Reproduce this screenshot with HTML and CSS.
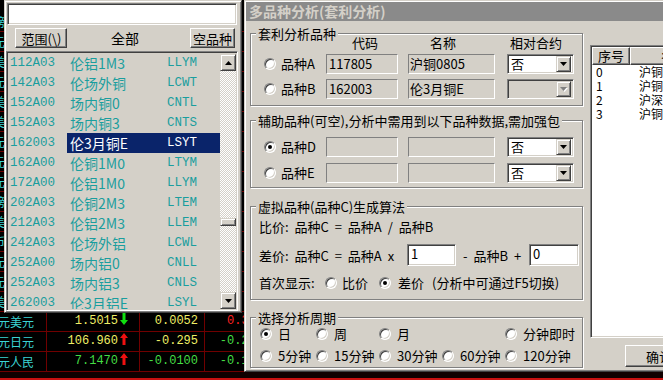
FILE: index.html
```html
<!DOCTYPE html>
<html>
<head>
<meta charset="utf-8">
<link rel="stylesheet" href="styles.css">
</head>
<body>
<div class="desk">
  <div class="drow"><span class="dn up">镑</span><span></span><span></span><span></span></div>
  <div class="drow"><span class="dn up">元</span><span></span><span></span><span></span></div>
  <div class="drow"><span class="dn up">美</span><span></span><span></span><span></span></div>
  <div class="drow"><span class="dn up">元</span><span></span><span></span><span></span></div>
  <div class="drow"><span class="dn up">美</span><span></span><span></span><span></span></div>
  <div class="drow"><span class="dn up">美</span><span></span><span></span><span></span></div>
  <div class="drow"><span class="dn up">元</span><span></span><span></span><span></span></div>
  <div class="drow"><span class="dn up">元</span><span></span><span></span><span></span></div>
  <div class="drow"><span class="dn up">元</span><span></span><span></span><span></span></div>
  <div class="drow"><span class="dn up">镑</span><span></span><span></span><span></span></div>
  <div class="drow"><span class="dn up">美</span><span></span><span></span><span></span></div>
  <div class="drow"><span class="dn up">币</span><span></span><span></span><span></span></div>
  <div class="drow"><span class="dn up">元</span><span></span><span></span><span></span></div>
  <div class="drow"><span class="dn up">元</span><span></span><span></span><span></span></div>
  <div class="drow"><span class="dn up">美</span><span></span><span></span><span></span></div>
  <div class="drow"><span class="dn">欧元美元</span><span class="dv yl">1.5015<svg class="ar" width="8" height="12" viewBox="0 0 8 12"><path d="M2.5 0h3v7H8L4 12 0 7h2.5z" fill="#10e010"/></svg></span><span class="dc yl">0.0052</span><span class="dp rdc">0.35%</span></div>
  <div class="drow"><span class="dn">美元日元</span><span class="dv yl">106.960<svg class="ar" width="8" height="12" viewBox="0 0 8 12"><path d="M2.5 12h3V5H8L4 0 0 5h2.5z" fill="#f01010"/></svg></span><span class="dc yl">-0.295</span><span class="dp gr">-0.28%</span></div>
  <div class="drow"><span class="dn">美元人民</span><span class="dv gr">7.1470<svg class="ar" width="8" height="12" viewBox="0 0 8 12"><path d="M2.5 12h3V5H8L4 0 0 5h2.5z" fill="#f01010"/></svg></span><span class="dc gr">-0.0100</span><span class="dp gr">-0.14%</span></div>
  <div class="dfoot"></div>
</div>

<div class="popup">
  <div class="pinput"></div>
  <div class="pbar">
    <div class="btn b1">范围(\)</div>
    <div class="plabel">全部</div>
    <div class="btn b2">空品种</div>
  </div>
  <div class="plist">
    <div class="prows">
      <div class="prow"><span>112A03</span><span>伦铝1M3</span><span>LLYM</span></div>
      <div class="prow"><span>142A03</span><span>伦场外铜</span><span>LCWT</span></div>
      <div class="prow"><span>152A00</span><span>场内铜0</span><span>CNTL</span></div>
      <div class="prow"><span>152A03</span><span>场内铜3</span><span>CNTS</span></div>
      <div class="prow sel-row"><span>162003</span><span>伦3月铜E</span><span>LSYT</span></div>
      <div class="prow"><span>162A00</span><span>伦铜1M0</span><span>LTYM</span></div>
      <div class="prow"><span>172A00</span><span>伦铝1M0</span><span>LLYM</span></div>
      <div class="prow"><span>202A03</span><span>伦铜2M3</span><span>LTEM</span></div>
      <div class="prow"><span>212A03</span><span>伦铝2M3</span><span>LLEM</span></div>
      <div class="prow"><span>242A03</span><span>伦场外铝</span><span>LCWL</span></div>
      <div class="prow"><span>252A00</span><span>场内铝0</span><span>CNLL</span></div>
      <div class="prow"><span>252A03</span><span>场内铝3</span><span>CNLS</span></div>
      <div class="prow"><span>262003</span><span>伦3月铝E</span><span>LSYL</span></div>
    </div>
    <div class="vscroll">
      <div class="sbtn"><svg width="7" height="4" viewBox="0 0 7 4"><path d="M3.5 0L7 4H0z" fill="#000"/></svg></div>
      <div class="strack"><div class="thumb"></div></div>
      <div class="sbtn"><svg width="7" height="4" viewBox="0 0 7 4"><path d="M0 0h7L3.5 4z" fill="#000"/></svg></div>
    </div>
  </div>
</div>

<div class="dlg">
  <div class="title">多品种分析(套利分析)</div>
  <div class="dbody">
    <div class="dleft">
      <div class="grp g1">
        <div class="gt">套利分析品种</div>
        <div class="hdr"><span class="h1">代码</span><span class="h2">名称</span><span class="h3">相对合约</span></div>
        <div class="frow r1"><span class="rd"></span><span class="fl">品种A</span><span class="tb c1">117805</span><span class="tb c2">沪铜0805</span><span class="sel"><span class="sv">否</span><span class="dd"><svg width="7" height="4" viewBox="0 0 7 4"><path d="M0 0h7L3.5 4z" fill="#000"/></svg></span></span></div>
        <div class="frow r2"><span class="rd"></span><span class="fl">品种B</span><span class="tb c1">162003</span><span class="tb c2">伦3月铜E</span><span class="sel dis"><span class="sv"></span><span class="dd"><svg width="8" height="5" viewBox="0 0 8 5"><path d="M1 1h7L4.5 5z" fill="#fff"/><path d="M0 0h7L3.5 4z" fill="#808080"/></svg></span></span></div>
      </div>
      <div class="grp g2">
        <div class="gt">辅助品种(可空),分析中需用到以下品种数据,需加强包</div>
        <div class="frow r1"><span class="rd on"></span><span class="fl">品种D</span><span class="tb c1"></span><span class="tb c2"></span><span class="sel"><span class="sv">否</span><span class="dd"><svg width="7" height="4" viewBox="0 0 7 4"><path d="M0 0h7L3.5 4z" fill="#000"/></svg></span></span></div>
        <div class="frow r2b"><span class="rd"></span><span class="fl">品种E</span><span class="tb c1"></span><span class="tb c2"></span><span class="sel"><span class="sv">否</span><span class="dd"><svg width="7" height="4" viewBox="0 0 7 4"><path d="M0 0h7L3.5 4z" fill="#000"/></svg></span></span></div>
      </div>
      <div class="grp g3">
        <div class="gt">虚拟品种(品种C)生成算法</div>
        <div class="l1">比价: 品种C = 品种A / 品种B</div>
        <div class="l2"><span class="pre">差价: 品种C = 品种A x</span><span class="wi w1">1</span><span class="mid">- 品种B +</span><span class="wi w2">0</span></div>
        <div class="l3"><span class="lab">首次显示:</span><span class="rd"></span><span class="o1">比价</span><span class="rd on"></span><span class="o2">差价</span><span class="o3">(分析中可通过F5切换)</span></div>
      </div>
      <div class="grp g4">
        <div class="gt">选择分析周期</div>
        <div class="prd p1">
          <span class="opt"><span class="rd on"></span><span>日</span></span>
          <span class="opt"><span class="rd"></span><span>周</span></span>
          <span class="opt"><span class="rd"></span><span>月</span></span>
          <span class="opt"></span>
          <span class="opt"><span class="rd"></span><span>分钟即时</span></span>
        </div>
        <div class="prd p2">
          <span class="opt"><span class="rd"></span><span>5分钟</span></span>
          <span class="opt"><span class="rd"></span><span>15分钟</span></span>
          <span class="opt"><span class="rd"></span><span>30分钟</span></span>
          <span class="opt"><span class="rd"></span><span>60分钟</span></span>
          <span class="opt"><span class="rd"></span><span>120分钟</span></span>
        </div>
      </div>
    </div>
    <div class="dright">
      <div class="rlist">
        <div class="rhead"><span class="rh rh1">序号</span><span class="rh rh2">名称</span></div>
        <div class="rr"><span>0</span><span>沪铜</span></div>
        <div class="rr"><span>1</span><span>沪铜</span></div>
        <div class="rr"><span>2</span><span>沪深</span></div>
        <div class="rr"><span>3</span><span>沪铜</span></div>
      </div>
      <div class="btn ok">确认</div>
    </div>
  </div>
</div>
</body>
</html>
```

FILE: styles.css
```css
body {
  margin: 0;
  width: 663px;
  height: 380px;
  overflow: hidden;
  background: #000;
  position: relative;
  font-family: "Noto Sans CJK SC", sans-serif;
}

/* underlying quote table */
.desk {
  padding-top: 12px;
  display: flex;
  flex-direction: column;
}
.drow {
  display: grid;
  grid-template-columns: 47px 93px 65px 65px;
  height: 20px;
  box-sizing: border-box;
  border-bottom: 1px solid #700000;
  font-size: 12px;
  line-height: 19px;
}
.drow > span {
  border-right: 1px solid #700000;
  overflow: hidden;
  white-space: nowrap;
}
.dn {
  color: #3cd4d4;
  text-indent: -14px;
  font-size: 12px;
}
.dn.up { text-indent: -7px; }
.dv, .dc, .dp {
  font-family: "Liberation Mono", monospace;
  font-size: 12px;
  text-align: right;
}
.dv { padding-right: 11px; }
.dc { padding-right: 6px; }
.dp { padding-right: 6px; }
.ar { margin-left: 2px; vertical-align: -1px; }
.yl { color: #eeee66; }
.gr { color: #44dd44; }
.rdc { color: #ff2020; }
.dfoot {
  height: 8px;
  box-sizing: border-box;
  border-bottom: 2px solid #c81010;
  background: #100000;
}

/* shared widgets */
.btn {
  box-sizing: border-box;
  height: 20px;
  background: #d4d0c8;
  border: 1px solid;
  border-color: #fff #404040 #404040 #fff;
  box-shadow: inset -1px -1px 0 #808080;
  display: flex;
  align-items: center;
  justify-content: center;
  color: #000;
  white-space: nowrap;
}
.rd {
  flex: none;
  position: relative;
  width: 12px;
  height: 12px;
  box-sizing: border-box;
  border-radius: 50%;
  background: #fff;
  border: 1px solid;
  border-color: #808080 #fff #fff #808080;
  box-shadow: inset 1px 1px 0 #404040, inset -1px -1px 0 #d4d0c8;
}
.rd.on::after {
  content: "";
  position: absolute;
  left: 3px;
  top: 3px;
  width: 4px;
  height: 4px;
  border-radius: 50%;
  background: #000;
}

/* popup list */
.popup {
  position: absolute;
  left: 4px;
  top: 0;
  width: 238px;
  height: 313px;
  box-sizing: border-box;
  background: #d4d0c8;
  border: 1px solid;
  border-color: #d4d0c8 #404040 #404040 #d4d0c8;
  box-shadow: inset 1px 1px 0 #fff, inset -1px -1px 0 #808080;
  padding: 2px 3px 0 1px;
  font-size: 14px;
}
.pinput {
  height: 22px;
  width: 230px;
  margin-left: 1px;
  box-sizing: border-box;
  background: #fff;
  border: 1px solid;
  border-color: #808080 #fff #fff #808080;
  box-shadow: inset 1px 1px 0 #404040, inset -1px -1px 0 #d4d0c8;
}
.pbar {
  display: flex;
  align-items: center;
  height: 20px;
  margin-top: 3px;
}
.pbar .btn { font-size: 13px; }
.b1 { margin-left: 9px; width: 52px; padding-left: 1px; }
.b2 { margin-right: 3px; width: 45px; }
.plabel {
  flex: 1;
  text-align: center;
  padding-right: 7px;
  line-height: 20px;
}
.plist {
  margin-top: 3px;
  width: 232px;
  height: 260px;
  box-sizing: border-box;
  display: flex;
  border: 1px solid;
  border-color: #808080 #fff #fff #808080;
  box-shadow: inset 1px 1px 0 #404040, inset -1px -1px 0 #d4d0c8;
  padding: 1px;
  overflow: hidden;
}
.prows {
  width: 212px;
  overflow: hidden;
}
.prow {
  display: grid;
  grid-template-columns: 59px 97px 56px;
  height: 20px;
  line-height: 20px;
  color: #1a9e9e;
  white-space: nowrap;
}
.prow > span:nth-child(1) { padding-left: 2px; font-family: "Liberation Mono", monospace; font-size: 12.5px; }
.prow > span:nth-child(2) { padding-left: 3px; }
.prow > span:nth-child(3) { padding-left: 3px; font-family: "Liberation Mono", monospace; font-size: 12.5px; }
.sel-row > span:nth-child(2),
.sel-row > span:nth-child(3) {
  background: #0a246a;
  color: #fff;
}
.vscroll {
  width: 16px;
  display: flex;
  flex-direction: column;
  padding-top: 1px;
}
.sbtn {
  flex: none;
  height: 17px;
  box-sizing: border-box;
  background: #d4d0c8;
  border: 1px solid;
  border-color: #d4d0c8 #404040 #404040 #d4d0c8;
  box-shadow: inset 1px 1px 0 #fff, inset -1px -1px 0 #808080;
  display: flex;
  align-items: center;
  justify-content: center;
}
.strack {
  flex: 1;
  background: repeating-conic-gradient(#fff 0 25%, #d4d0c8 0 50%) 0 0 / 2px 2px;
}
.thumb {
  margin-top: 147px;
  height: 8px;
  box-sizing: border-box;
  background: #d4d0c8;
  border: 1px solid;
  border-color: #d4d0c8 #404040 #404040 #d4d0c8;
  box-shadow: inset 1px 1px 0 #fff, inset -1px -1px 0 #808080;
}

/* dialog */
.dlg {
  position: absolute;
  left: 244px;
  top: 0;
  width: 480px;
  height: 372px;
  box-sizing: border-box;
  background: #d4d0c8;
  border: 1px solid;
  border-color: #d4d0c8 #404040 #404040 #d4d0c8;
  box-shadow: inset 1px 1px 0 #fff, inset -1px -1px 0 #808080;
  padding: 1px;
  font-size: 13px;
  color: #000;
}
.title {
  height: 19px;
  line-height: 19px;
  padding-left: 3px;
  background: #8a8a8a;
  color: #d4d0c8;
  font-size: 14px;
  font-weight: bold;
  white-space: nowrap;
}
.dbody {
  display: flex;
  align-items: flex-start;
  padding-left: 4px;
}
.dleft {
  width: 333px;
  flex: none;
  display: flex;
  flex-direction: column;
}
.grp {
  box-sizing: border-box;
  border: 1px solid #808080;
  box-shadow: 1px 1px 0 #fff, inset 1px 1px 0 #fff;
}
.gt {
  width: max-content;
  margin: -8px 0 0 5px;
  padding: 0 2px;
  height: 16px;
  line-height: 16px;
  background: #d4d0c8;
  white-space: nowrap;
}
.g1 { margin-top: 12px; padding-bottom: 6px; }
.g2 { margin-top: 14px; padding-bottom: 4px; }
.g3 { margin-top: 18px; padding-bottom: 8px; }
.g4 { margin-top: 17px; padding-bottom: 3px; }

.hdr {
  display: flex;
  margin-top: -6px;
  height: 14px;
  line-height: 14px;
  padding-left: 101px;
}
.h1 { width: 78px; }
.h2 { width: 80px; }
.frow {
  display: flex;
  align-items: center;
  height: 20px;
}
.g1 .r1 { margin-top: 4px; }
.g1 .r2 { margin-top: 5px; }
.g2 .r1 { margin-top: 8px; }
.g2 .r2b { margin-top: 6px; }
.frow .rd { margin-left: 13px; }
.fl { margin-left: 5px; width: 45px; line-height: 20px; }
.tb {
  box-sizing: border-box;
  height: 20px;
  line-height: 18px;
  border: 1px solid;
  border-color: #808080 #fff #fff #808080;
  background: #d4d0c8;
  padding-left: 2px;
  white-space: nowrap;
  overflow: hidden;
}
.c1 { width: 72px; }
.c2 { width: 87px; margin-left: 10px; padding-left: 1px; }
.sel {
  margin-left: 12px;
  width: 67px;
  height: 20px;
  box-sizing: border-box;
  display: flex;
  align-items: center;
  background: #fff;
  border: 1px solid;
  border-color: #808080 #fff #fff #808080;
  box-shadow: inset 1px 1px 0 #404040, inset -1px -1px 0 #d4d0c8;
  padding: 1px 2px 1px 1px;
}
.sel.dis { background: #d4d0c8; }
.sv { flex: 1; padding-left: 2px; line-height: 16px; }
.dd {
  width: 15px;
  height: 16px;
  box-sizing: border-box;
  background: #d4d0c8;
  border: 1px solid;
  border-color: #d4d0c8 #404040 #404040 #d4d0c8;
  box-shadow: inset 1px 1px 0 #fff, inset -1px -1px 0 #808080;
  display: flex;
  align-items: center;
  justify-content: center;
}

.l1 {
  margin-top: 4px;
  height: 16px;
  line-height: 16px;
  padding-left: 8px;
  white-space: pre;
  word-spacing: 3px;
}
.l2 {
  margin-top: 9px;
  height: 22px;
  display: flex;
  align-items: center;
  padding-left: 8px;
  white-space: pre;
  word-spacing: 3px;
}
.pre { width: 148px; }
.wi {
  box-sizing: border-box;
  height: 22px;
  line-height: 18px;
  background: #fff;
  border: 1px solid;
  border-color: #808080 #fff #fff #808080;
  box-shadow: inset 1px 1px 0 #404040, inset -1px -1px 0 #d4d0c8;
  padding-left: 3px;
}
.w1 { width: 49px; }
.w2 { width: 50px; }
.mid { width: 73px; box-sizing: border-box; padding-left: 7px; }
.l3 {
  margin-top: 9px;
  height: 16px;
  line-height: 16px;
  display: flex;
  align-items: center;
  padding-left: 8px;
  white-space: nowrap;
}
.lab { width: 66px; }
.o1 { margin-left: 5px; width: 37px; }
.o2 { margin-left: 7px; }
.o3 { margin-left: 8px; }

.prd {
  display: grid;
  grid-template-columns: 56px 63px 63px 63px auto;
  padding-left: 9px;
  height: 16px;
  align-items: center;
}
.p2 { margin-top: 6px; }
.opt {
  display: flex;
  align-items: center;
  line-height: 16px;
  white-space: nowrap;
}
.opt .rd { margin-right: 6px; }

.dright {
  margin-left: 7px;
  margin-top: 24px;
  display: flex;
  flex-direction: column;
}
.rlist {
  width: 130px;
  height: 293px;
  box-sizing: border-box;
  background: #fff;
  border: 1px solid;
  border-color: #808080 #fff #fff #808080;
  box-shadow: inset 1px 1px 0 #404040, inset -1px -1px 0 #d4d0c8;
  padding: 1px;
}
.rhead { display: flex; }
.rh {
  height: 18px;
  box-sizing: border-box;
  line-height: 16px;
  background: #d4d0c8;
  border: 1px solid;
  border-color: #fff #404040 #404040 #fff;
  box-shadow: inset -1px -1px 0 #808080;
  white-space: nowrap;
}
.rh1 { width: 38px; text-align: center; }
.rh2 { flex: 1; padding-left: 30px; }
.rr {
  display: flex;
  height: 14px;
  line-height: 14px;
  font-size: 12px;
  white-space: nowrap;
}
.rr > span:first-child { width: 38px; padding-left: 4px; box-sizing: border-box; }
.rr > span:last-child { padding-left: 9px; }
.ok {
  margin-top: 7px;
  margin-left: 35px;
  width: 80px;
  height: 22px;
  justify-content: flex-start;
  padding-left: 20px;
  font-size: 13px;
}
```
